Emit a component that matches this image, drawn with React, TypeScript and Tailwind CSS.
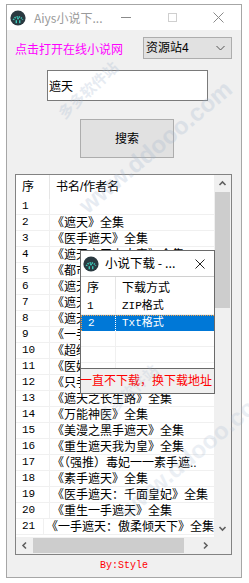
import React from "react";

const AppIcon = ({ size = 16 }: { size?: number }) => (
  <svg width={size} height={size} viewBox="0 0 16 16">
    <circle cx="8" cy="8" r="7.6" fill="#2a3940" />
    <path
      d="M3.4 10 A4.9 4.9 0 0 1 12.6 10"
      fill="none"
      stroke="#3cc9b9"
      strokeWidth="1.7"
      strokeDasharray="1.3 0.9"
    />
    <rect x="5.6" y="10.2" width="1.4" height="3" fill="#3cc9b9" />
    <rect x="9" y="10.2" width="1.4" height="3" fill="#3cc9b9" />
    <circle cx="8" cy="8.6" r="1" fill="#3cc9b9" />
  </svg>
);

const Chevron = ({ dir }: { dir: "up" | "down" | "left" | "right" }) => {
  const d = {
    up: "M1.5 6 L4.5 3 L7.5 6",
    down: "M1.5 3 L4.5 6 L7.5 3",
    left: "M6 1.5 L3 4.5 L6 7.5",
    right: "M3 1.5 L6 4.5 L3 7.5",
  }[dir];
  return (
    <svg width="9" height="9" viewBox="0 0 9 9">
      <path d={d} fill="none" stroke="#606060" strokeWidth="1.6" />
    </svg>
  );
};

const books = [
  "",
  "《遮天》全集",
  "《医手遮天》全集",
  "《遮天之无上大帝》全集",
  "《都市遮天》全集",
  "《遮天之龙魂》全集",
  "《遮天之圣体》全集",
  "《遮天后传》全集",
  "《一手遮天》全集",
  "《超级遮天系统》全集",
  "《医妃遮天》全集",
  "《只手遮天》全集",
  "《遮天之长生路》全集",
  "《万能神医》全集",
  "《美漫之黑手遮天》全集",
  "《重生遮天我为皇》全集",
  "《（强推）毒妃一一素手遮..",
  "《素手遮天》全集",
  "《医手遮天：千面皇妃》全集",
  "《重生一手遮天》全集",
  "《一手遮天：傲柔倾天下》全集",
];

const mono = "font-['Liberation_Mono','Noto_Sans_CJK_SC',monospace]";

export default function App() {
  return (
    <div className="relative w-[249px] h-[583px] bg-white overflow-hidden text-black font-['Liberation_Sans','Noto_Sans_CJK_SC',sans-serif] text-[12px] leading-none">
      {/* ===== MAIN WINDOW ===== */}
      <div className="ml-[6px] mt-[4px] w-[236px] h-[574px] border border-[#a6a6a6] flex flex-col">
        {/* title bar */}
        <div className="h-[25px] bg-white flex items-center shrink-0">
          <div className="ml-[3px] mr-[8px] flex items-center">
            <AppIcon />
          </div>
          <span className="text-[12px] text-[#9a9a9a] whitespace-nowrap font-['Noto_Sans_CJK_SC',sans-serif]">
            Aiys小说下...
          </span>
          <div className="ml-auto flex h-full">
            <div className="w-[46px] flex items-center justify-center">
              <div className="w-[10px] h-[1px] bg-[#8a8a8a]" />
            </div>
            <div className="w-[46px] flex items-center justify-center">
              <div className="w-[9px] h-[9px] border border-[#cfcfcf]" />
            </div>
            <div className="w-[46px] flex items-center justify-center">
              <svg width="11" height="11" viewBox="0 0 11 11">
                <path d="M0.5 0.5 L10.5 10.5 M10.5 0.5 L0.5 10.5" stroke="#8a8a8a" strokeWidth="1" />
              </svg>
            </div>
          </div>
        </div>

        {/* body */}
        <div className="flex-1 bg-[#f0f0f0] flex flex-col">
          <div className="mt-[7px] flex items-center">
            <span className="ml-[8px] mt-[3px] text-[#ff00ff] whitespace-nowrap">点击打开在线小说网</span>
            <div className="ml-auto mr-[9px] w-[89px] h-[22px] bg-[#e1e1e1] border border-[#adadad] flex items-center pl-[2px] pr-[6px]">
              <span className="whitespace-nowrap">资源站4</span>
              <svg className="ml-auto" width="9" height="6" viewBox="0 0 9 6">
                <path d="M0.5 1 L4.5 5 L8.5 1" fill="none" stroke="#555" strokeWidth="1" />
              </svg>
            </div>
          </div>

          <div className="ml-[40px] mt-[11px] w-[161px] h-[31px] bg-white border border-[#7a7a7a] pl-[1px] pt-[10px]">
            遮天
          </div>

          <div className="ml-[73px] mt-[18px] w-[94px] h-[39px] bg-[#e1e1e1] border border-[#adadad] flex items-center justify-center">
            搜索
          </div>

          {/* ===== LIST VIEW ===== */}
          <div className="ml-[8px] mt-[16px] w-[217px] h-[381px] border border-[#828282] bg-white grid grid-cols-[198px_17px] grid-rows-[362px_17px]">
            <div className="overflow-hidden">
              <div className="flex h-[24px] items-center">
                <div className="w-[34px] h-full pl-[6px] flex items-center border-r border-[#e5e5e5]">序</div>
                <div className="pl-[6px] whitespace-nowrap">书名/作者名</div>
              </div>
              {books.map((b, i) => (
                <div key={i} className="flex h-[16px] border-b border-[#f0f0f0] items-center">
                  <div className={`w-[34px] h-full pl-[6px] flex items-center border-r border-[#f0f0f0] text-[11px] ${mono}`}>
                    {i + 1}
                  </div>
                  <div className="pl-[2px] whitespace-nowrap">{b}</div>
                </div>
              ))}
            </div>

            {/* vertical scrollbar */}
            <div className="bg-[#f0f0f0] flex flex-col">
              <div className="h-[17px] flex items-center justify-center">
                <Chevron dir="up" />
              </div>
              <div className="flex-1 flex flex-col px-[1px]">
                <div className="h-[116px] bg-[#cdcdcd]" />
              </div>
              <div className="h-[17px] flex items-center justify-center">
                <Chevron dir="down" />
              </div>
            </div>

            {/* horizontal scrollbar */}
            <div className="bg-[#f0f0f0] flex items-center">
              <div className="w-[17px] h-full flex items-center justify-center">
                <Chevron dir="left" />
              </div>
              <div className="flex-1 h-full py-[1px] flex">
                <div className="w-[151px] bg-[#cdcdcd]" />
              </div>
              <div className="w-[17px] h-full flex items-center justify-center">
                <Chevron dir="right" />
              </div>
            </div>
            <div className="bg-[#f0f0f0]" />
          </div>

          <div className={`flex-1 flex items-center justify-center text-[10px] text-[#ff0000] ${mono}`}>
            By:Style
          </div>
        </div>
      </div>

      {/* ===== DOWNLOAD DIALOG ===== */}
      <div className="absolute left-[80px] top-[250px] w-[135px] h-[144px] border border-[#6a6a6a] bg-[#f0f0f0] flex flex-col">
        <div className="h-[25px] bg-white flex items-center shrink-0">
          <div className="ml-[2px] mr-[6px] flex items-center">
            <AppIcon />
          </div>
          <span className="text-[12.5px] whitespace-nowrap font-['Noto_Sans_CJK_SC',sans-serif]">小说下载 - ...</span>
          <svg className="ml-auto mr-[9px]" width="10" height="10" viewBox="0 0 10 10">
            <path d="M0.5 0.5 L9.5 9.5 M9.5 0.5 L0.5 9.5" stroke="#222" strokeWidth="1" />
          </svg>
        </div>
        <div className="h-[93px] bg-white border-t border-[#d0d0d0] border-b border-b-[#6a6a6a] overflow-hidden">
          <div className="flex h-[22px] items-center">
            <div className="w-[35px] h-full pl-[6px] flex items-center border-r border-[#e5e5e5]">序</div>
            <div className="pl-[6px] whitespace-nowrap">下载方式</div>
          </div>
          <div className="flex h-[16px] items-center border-b border-[#f0f0f0]">
            <div className={`w-[35px] h-full pl-[6px] flex items-center border-r border-[#f0f0f0] text-[11px] ${mono}`}>1</div>
            <div className={`pl-[6px] whitespace-nowrap text-[11px] ${mono}`}>ZIP格式</div>
          </div>
          <div className="flex h-[16px] items-center bg-[#0078d7] text-white border-t border-dotted border-[#f0a04a]">
            <div className={`w-[35px] h-full pl-[6px] flex items-center border-r border-white border-l border-dotted border-l-[#f0a04a] text-[11px] ${mono}`}>2</div>
            <div className={`pl-[6px] whitespace-nowrap text-[11px] ${mono}`}>Txt格式</div>
          </div>
          {[0, 1, 2].map((k) => (
            <div key={k} className="flex h-[16px] border-b border-[#f0f0f0]">
              <div className="w-[35px] h-full border-r border-[#f0f0f0]" />
            </div>
          ))}
        </div>
        <div className="flex-1 flex items-center -ml-[1px] text-[#ff0000] whitespace-nowrap">
          一直不下载，换下载地址
        </div>
      </div>

      {/* ===== WATERMARK ===== */}
      <div className="pointer-events-none absolute left-[50px] top-[82px] -rotate-[43deg] text-[15px] font-bold text-[#9fb2cc] opacity-25 whitespace-nowrap font-['Noto_Sans_CJK_SC',sans-serif]">
        多多软件站
      </div>
      <div className="pointer-events-none absolute left-[60px] top-[135px] -rotate-[40deg] text-[24px] font-bold text-[#9fb2cc] opacity-25 whitespace-nowrap font-['Liberation_Sans',sans-serif]">
        www.ddooo.com
      </div>
      <div className="pointer-events-none absolute left-[90px] top-[385px] -rotate-[43deg] text-[15px] font-bold text-[#9fb2cc] opacity-20 whitespace-nowrap font-['Noto_Sans_CJK_SC',sans-serif]">
        多多软件站
      </div>
      <div className="pointer-events-none absolute left-[100px] top-[440px] -rotate-[40deg] text-[24px] font-bold text-[#9fb2cc] opacity-20 whitespace-nowrap font-['Liberation_Sans',sans-serif]">
        www.ddooo.com
      </div>
    </div>
  );
}
